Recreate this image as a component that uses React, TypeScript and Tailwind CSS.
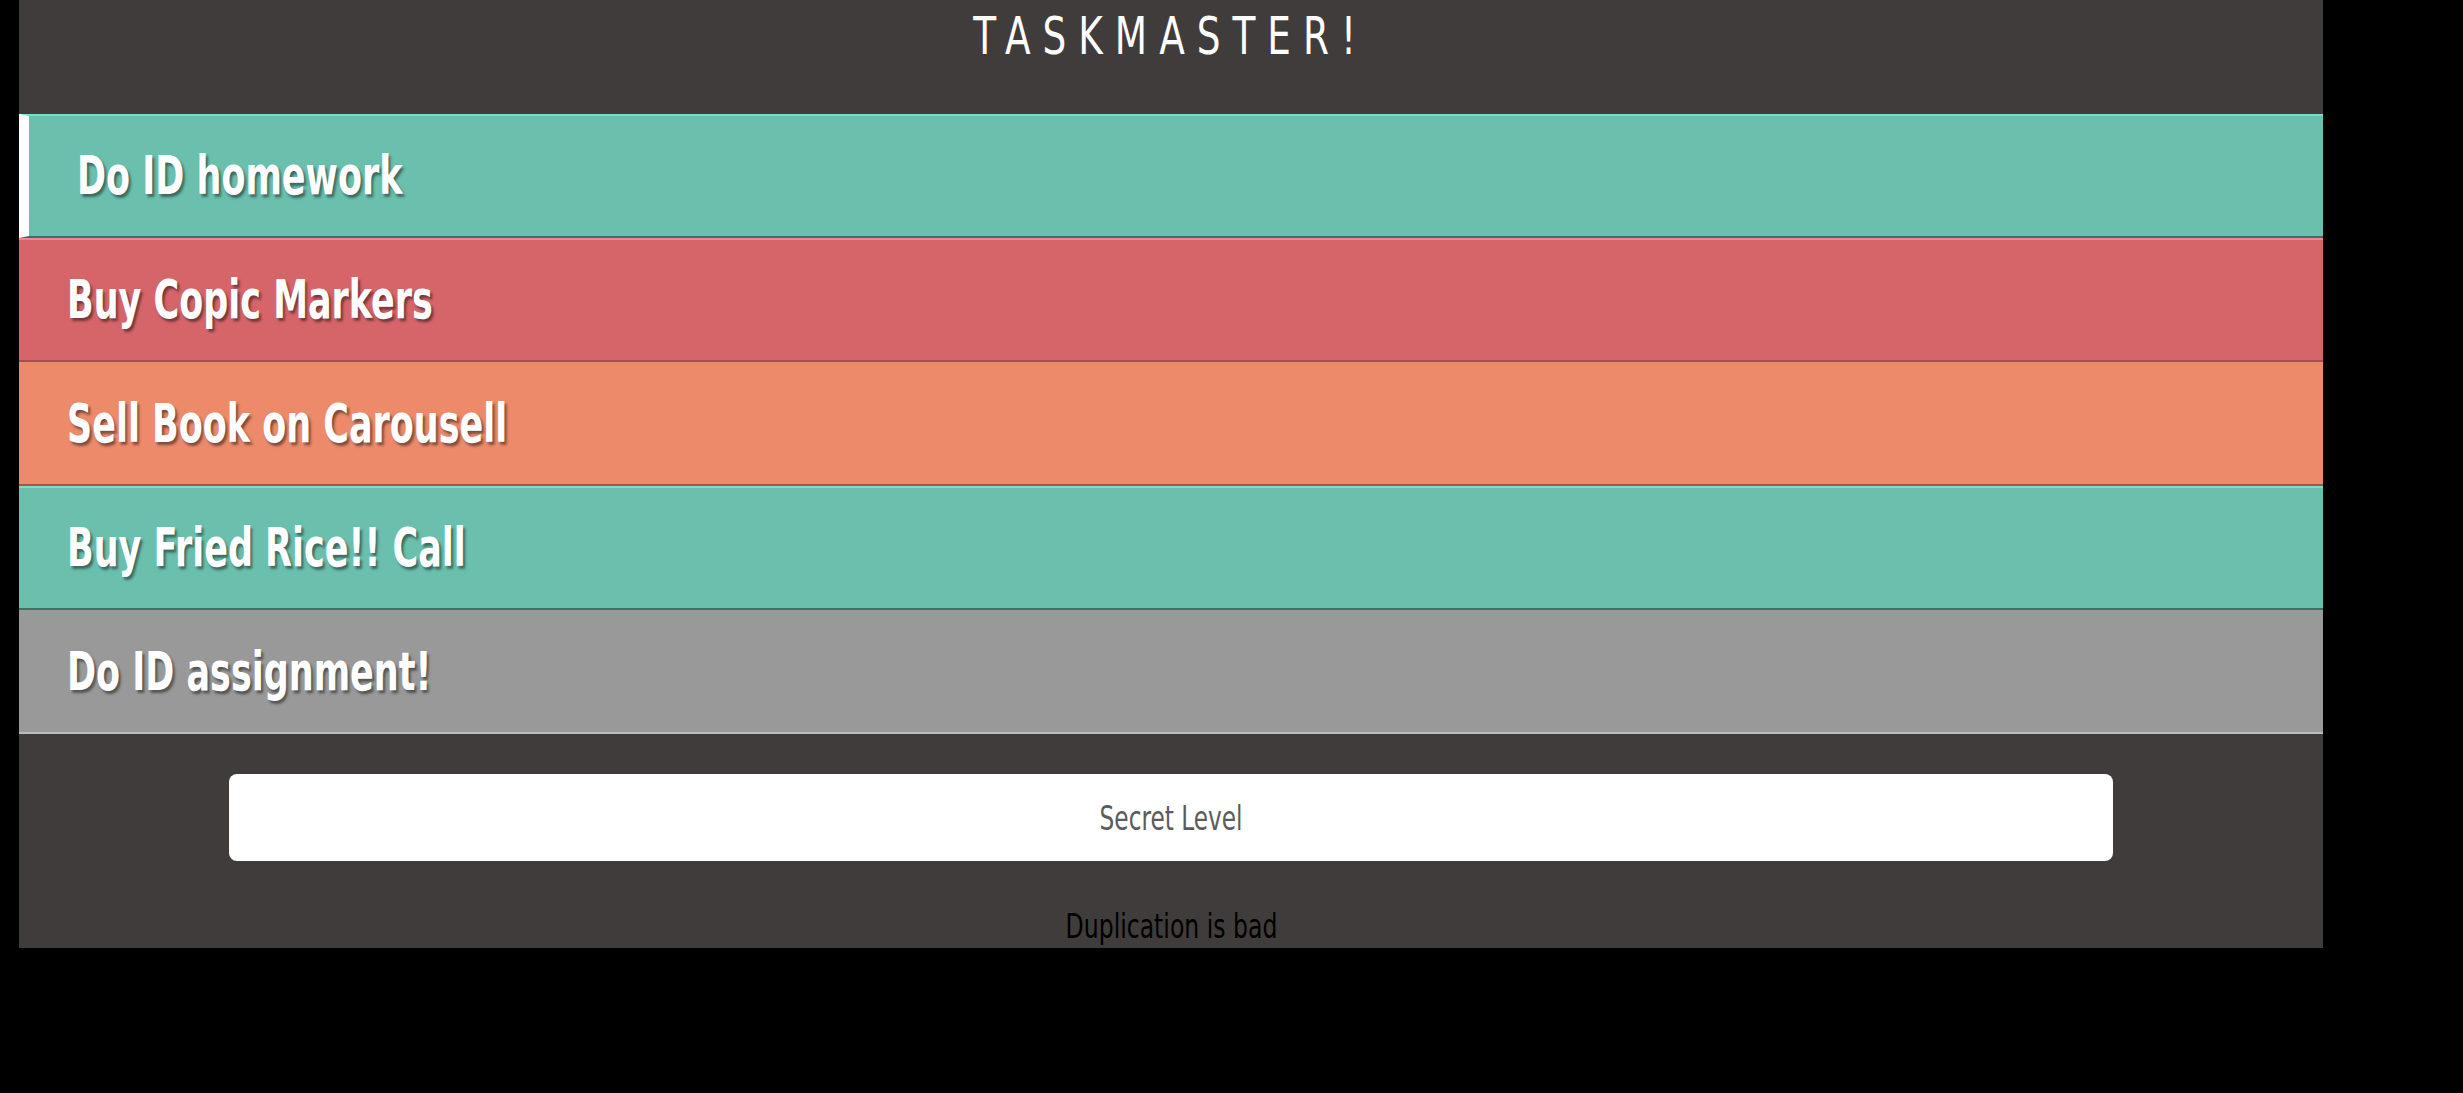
import React from "react";

type Task = {
  title: string;
  bg: string;
  first?: boolean;
};

export default function App() {
  const tasks: Task[] = [
    {
      title: "Do ID homework",
      bg: "bg-[#6bbfad] border-t-[#7cdcc5] border-b-[#3e6f64]",
      first: true,
    },
    {
      title: "Buy Copic Markers",
      bg: "bg-[#d6656a] border-t-[#e98a8e] border-b-[#a34f4f]",
    },
    {
      title: "Sell Book on Carousell",
      bg: "bg-[#ec8a6a] border-t-[#ec8a6a] border-b-[#a8573f]",
    },
    {
      title: "Buy Fried Rice!! Call",
      bg: "bg-[#6bbfad] border-t-[#7cdcc5] border-b-[#3e6f64]",
    },
    {
      title: "Do ID assignment!",
      bg: "bg-[#999999] border-t-[#999999] border-b-[#bcbcbc]",
    },
  ];

  return (
    <div className="min-h-screen w-full bg-black font-['DejaVu_Sans_Condensed','Liberation_Sans',sans-serif]">
      <div className="ml-[19px] w-[2304px] bg-[#403c3b] pb-[5px]">
        {/* Header */}
        <header className="h-[114px] pt-[10px] flex justify-center">
          <h1 className="inline-block scale-x-[0.8] text-[52px] leading-none text-white tracking-[15px]">
            TASKMASTER!
          </h1>
        </header>

        {/* Tasks */}
        <ul>
          {tasks.map((task, index) => (
            <li
              key={index}
              className={`h-[124px] flex items-center border-t-2 border-b-2 ${task.bg} ${
                task.first ? "border-l-[10px] border-l-white pl-[48px]" : "pl-[48px]"
              }`}
            >
              <span className="inline-block origin-left scale-x-[0.72] whitespace-nowrap text-[54px] font-bold leading-none text-white [text-shadow:3px_3px_3px_rgba(0,0,0,0.45)]">
                {task.title}
              </span>
            </li>
          ))}
        </ul>

        {/* Footer */}
        <div className="mx-[210px] mt-[40px]">
          <button
            type="button"
            className="w-full h-[87px] rounded-[8px] bg-white flex items-center justify-center text-[34px] leading-none text-[#5c5c5c]"
          >
            <span className="inline-block scale-x-[0.76]">Secret Level</span>
          </button>
        </div>
        <p className="mt-[48px] flex justify-center text-[34px] leading-none text-black">
          <span className="inline-block scale-x-[0.77]">Duplication is bad</span>
        </p>
      </div>
    </div>
  );
}
